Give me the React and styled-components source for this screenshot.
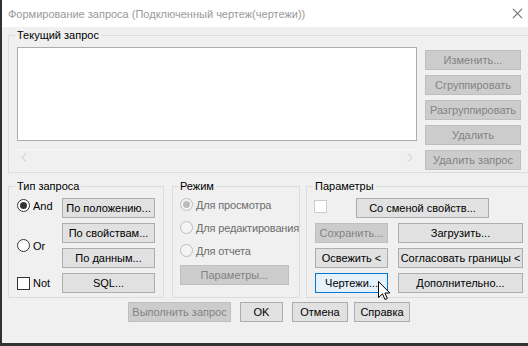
import React from "react"
import styled, { createGlobalStyle, css } from "styled-components"

const GlobalStyle = createGlobalStyle`
  html, body {
    margin: 0;
    padding: 0;
    background: #2f322f;
    overflow: hidden;
  }
  body {
    font-family: "Liberation Sans", Arial, sans-serif;
    font-size: 11px;
    color: #000;
  }
`

const Window = styled.div`
  position: relative;
  width: 526px;
  height: 343px;
  margin-left: 2px;
  background: #f0f0f0;
  display: flex;
  flex-direction: column;
  overflow: hidden;
`

const TitleBar = styled.div`
  height: 27px;
  width: 526px;
  flex: none;
  background: #fff;
  display: flex;
  align-items: center;
  justify-content: space-between;
  padding: 0 0 0 6px;
  color: #999;
  font-size: 11px;
  box-sizing: border-box;
`

const Caption = styled.span`
  white-space: nowrap;
`

const CloseBtn = styled.div`
  width: 22px;
  height: 27px;
  flex: none;
  position: relative;
  &::before,
  &::after {
    content: "";
    position: absolute;
    left: 5px;
    top: 13px;
    width: 13px;
    height: 1px;
    background: #6a6a6a;
  }
  &::before {
    transform: rotate(45deg);
  }
  &::after {
    transform: rotate(-45deg);
  }
`

const Body = styled.div`
  padding: 1px 0 0 6px;
  display: flex;
  flex-direction: column;
`

const Group = styled.fieldset`
  margin: 0 0 0 ${p => p.$ml || 0}px;
  padding: ${p => p.$pad || "5px 8px 4px 8px"};
  border: 1px solid #dcdcdc;
  width: ${p => p.$w}px;
  box-sizing: border-box;
  min-width: 0;
  flex: none;
`

const Legend = styled.legend`
  padding: 0 2px;
  margin-left: -2px;
  line-height: 14px;
  font-size: 11px;
`

const TopGrid = styled.div`
  display: grid;
  grid-template-columns: 400px 96px;
  column-gap: 8px;
`

const ListCol = styled.div`
  display: flex;
  flex-direction: column;
`

const ListBox = styled.div`
  height: 94px;
  background: #fff;
  border: 1px solid #acacac;
  box-sizing: border-box;
`

const HScroll = styled.div`
  height: 16px;
  margin-top: 8px;
  display: flex;
  align-items: center;
  justify-content: space-between;
  padding: 0 4px;
  border-top: 1px solid #fafafa;
  box-sizing: border-box;
`

const ButtonCol = styled.div`
  display: flex;
  flex-direction: column;
  gap: 5px;
  padding-top: 3px;
`

const Button = styled.button`
  height: 20px;
  width: ${p => (p.$w ? `${p.$w}px` : "100%")};
  margin-left: ${p => p.$ml || 0}px;
  box-sizing: border-box;
  padding: 0;
  font-family: "Liberation Sans", Arial, sans-serif;
  font-size: 11px;
  color: #000;
  background: #e1e1e1;
  border: 1px solid #adadad;
  white-space: nowrap;
  flex: none;
  ${p =>
    p.disabled &&
    css`
      background: #cccccc;
      border-color: #bfbfbf;
      color: #838383;
    `}
  ${p =>
    p.$hot &&
    css`
      background: #e5f1fb;
      border-color: #0078d7;
    `}
`

const BottomRow = styled.div`
  display: flex;
  margin-top: 6px;
`

const TypeGrid = styled.div`
  display: grid;
  grid-template-columns: 45px 93px;
  grid-template-rows: repeat(4, 20px);
  row-gap: 5px;
`

const Cell = styled.div`
  display: flex;
  align-items: ${p => (p.$top ? "flex-start" : "center")};
  padding-top: ${p => p.$top || 0}px;
  grid-row: ${p => p.$row};
  grid-column: ${p => p.$col || "auto"};
`

const Option = styled.label`
  display: flex;
  align-items: center;
  gap: 3px;
  height: ${p => p.$h || 20}px;
  color: ${p => (p.$off ? "#6d6d6d" : "#000")};
  letter-spacing: ${p => (p.$off ? "-0.15px" : "0")};
  white-space: nowrap;
`

const Radio = styled.span`
  width: 13px;
  height: 13px;
  border-radius: 50%;
  box-sizing: border-box;
  border: 1px solid ${p => (p.$off ? "#bcbcbc" : "#333")};
  background: ${p => (p.$off ? "#f4f4f4" : "#fff")};
  display: flex;
  align-items: center;
  justify-content: center;
  flex: none;
  &::after {
    content: "";
    display: ${p => (p.$on ? "block" : "none")};
    width: 7px;
    height: 7px;
    border-radius: 50%;
    background: ${p => (p.$off ? "#bcbcbc" : "#333")};
  }
`

const Check = styled.span`
  width: 13px;
  height: 13px;
  box-sizing: border-box;
  border: 1px solid ${p => (p.$off ? "#cccccc" : "#333")};
  background: #fff;
  flex: none;
  margin-left: ${p => p.$ml || 0}px;
  align-self: ${p => (p.$up ? "flex-start" : "auto")};
  margin-top: ${p => p.$up || 0}px;
`

const ModeCol = styled.div`
  display: flex;
  flex-direction: column;
`

const ParamGrid = styled.div`
  display: grid;
  grid-template-columns: 73px 125px;
  grid-auto-rows: 20px;
  column-gap: 10px;
  row-gap: 5px;
`

const ParamFirst = styled.div`
  grid-column: 1 / span 2;
  display: flex;
  align-items: center;
`

const Footer = styled.div`
  display: flex;
  padding-left: 120px;
  margin-top: 4px;
`

const Cursor = styled.svg`
  position: absolute;
  left: 376px;
  top: 281px;
`

const Chevron = ({ dir }) => (
  <svg width="6" height="9" viewBox="0 0 6 9">
    <path
      d={dir === "l" ? "M5 0.5 L1 4.5 L5 8.5" : "M1 0.5 L5 4.5 L1 8.5"}
      fill="none"
      stroke="#c2c2c2"
      strokeWidth="1"
    />
  </svg>
)

export default function App() {
  return (
    <>
      <GlobalStyle />
      <Window>
        <TitleBar>
          <Caption>Формирование запроса (Подключенный чертеж(чертежи))</Caption>
          <CloseBtn />
        </TitleBar>
        <Body>
          <Group $w={532} $pad="5px 8px 2px 8px">
            <Legend>Текущий запрос</Legend>
            <TopGrid>
              <ListCol>
                <ListBox />
                <HScroll>
                  <Chevron dir="l" />
                  <Chevron dir="r" />
                </HScroll>
              </ListCol>
              <ButtonCol>
                <Button disabled>Изменить...</Button>
                <Button disabled>Сгруппировать</Button>
                <Button disabled>Разгруппировать</Button>
                <Button disabled>Удалить</Button>
                <Button disabled>Удалить запрос</Button>
              </ButtonCol>
            </TopGrid>
          </Group>
          <BottomRow>
            <Group $w={156}>
              <Legend>Тип запроса</Legend>
              <TypeGrid>
                <Cell $row={1} $col={1} $top={1}>
                  <Option $h={13}>
                    <Radio $on />
                    And
                  </Option>
                </Cell>
                <Cell $row="2 / span 2" $col={1}>
                  <Option>
                    <Radio />
                    Or
                  </Option>
                </Cell>
                <Cell $row={4} $col={1}>
                  <Option>
                    <Check />
                    Not
                  </Option>
                </Cell>
                <Cell $row={1} $col={2}>
                  <Button>По положению...</Button>
                </Cell>
                <Cell $row={2} $col={2}>
                  <Button>По свойствам...</Button>
                </Cell>
                <Cell $row={3} $col={2}>
                  <Button>По данным...</Button>
                </Cell>
                <Cell $row={4} $col={2}>
                  <Button>SQL...</Button>
                </Cell>
              </TypeGrid>
            </Group>
            <Group $w={128} $ml={8} $pad="0 10px 4px 7px">
              <Legend>Режим</Legend>
              <ModeCol>
                <Option $h={23} $off>
                  <Radio $on $off />
                  Для просмотра
                </Option>
                <Option $h={23} $off>
                  <Radio $off />
                  Для редактирования
                </Option>
                <Option $h={23} $off>
                  <Radio $off />
                  Для отчета
                </Option>
                <Button disabled $w={109} style={{ marginTop: 3 }}>
                  Параметры...
                </Button>
              </ModeCol>
            </Group>
            <Group $w={250} $ml={6}>
              <Legend>Параметры</Legend>
              <ParamGrid>
                <ParamFirst>
                  <Check $off $ml={-1} $up={2} />
                  <Button $w={133} $ml={29}>
                    Со сменой свойств...
                  </Button>
                </ParamFirst>
                <Button disabled>Сохранить...</Button>
                <Button>Загрузить...</Button>
                <Button>Освежить &lt;</Button>
                <Button>Согласовать границы &lt;</Button>
                <Button $hot>Чертежи...</Button>
                <Button>Дополнительно...</Button>
              </ParamGrid>
            </Group>
          </BottomRow>
          <Footer>
            <Button disabled $w={103}>
              Выполнить запрос
            </Button>
            <Button $w={43} $ml={9}>
              OK
            </Button>
            <Button $w={56} $ml={9}>
              Отмена
            </Button>
            <Button $w={56} $ml={6}>
              Справка
            </Button>
          </Footer>
        </Body>
        <Cursor width="13" height="20" viewBox="0 0 13 20">
          <path
            d="M0.5 0.5 L0.5 16.5 L4.5 12.8 L7 18.5 L9.3 17.5 L6.9 12 L11.8 12 Z"
            fill="#fff"
            stroke="#000"
            strokeWidth="1"
            strokeLinejoin="miter"
          />
        </Cursor>
      </Window>
    </>
  )
}
